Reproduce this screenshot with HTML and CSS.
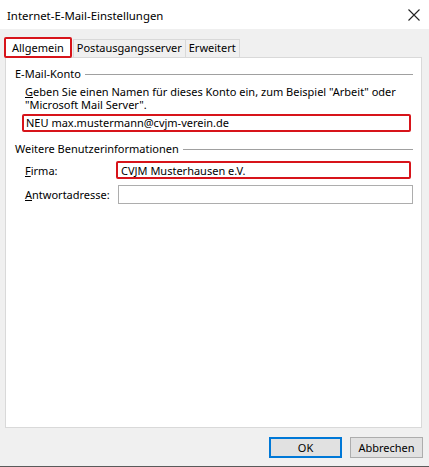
FILE: index.html
```html
<!DOCTYPE html>
<html>
<head>
<meta charset="utf-8">
<link rel="stylesheet" href="styles.css">
</head>
<body>
<div class="window">
  <div class="titlebar">
    <span class="title">Internet-E-Mail-Einstellungen</span>
    <svg class="close" width="12" height="12" viewBox="0 0 12 12"><path d="M0.5 0.5 L11.5 11.5 M11.5 0.5 L0.5 11.5" stroke="#222" stroke-width="1.1" fill="none"/></svg>
  </div>
  <div class="client">
    <div class="tabs">
      <div class="tab active">Allgemein</div>
      <div class="tab">Postausgangsserver</div>
      <div class="tab">Erweitert</div>
    </div>
    <div class="panel">
      <div class="group-head"><span>E-Mail-Konto</span><span class="rule"></span></div>
      <p class="desc">Geben Sie einen Namen für dieses Konto ein, zum Beispiel "Arbeit" oder "Microsoft Mail Server".</p>
      <div class="input red wide">NEU max.mustermann@cvjm-verein.de</div>
      <div class="group-head second"><span>Weitere Benutzerinformationen</span><span class="rule"></span></div>
      <div class="row">
        <label class="lbl">Firma:</label>
        <div class="input red">CVJM Musterhausen e.V.</div>
      </div>
      <div class="row">
        <label class="lbl">Antwortadresse:</label>
        <div class="input plain"></div>
      </div>
    </div>
    <div class="buttons">
      <button class="btn default">OK</button>
      <button class="btn">Abbrechen</button>
    </div>
  </div>
</div>
</body>
</html>
```
FILE: styles.css
```css
* { box-sizing: border-box; }
html, body { margin: 0; padding: 0; }
body {
  width: 429px;
  height: 467px;
  background: #f0f0f0;
  font-family: "Noto Sans", "Open Sans", sans-serif;
  font-size: 11px;
  color: #000;
  overflow: hidden;
}
.window {
  width: 429px;
  height: 467px;
  display: flex;
  flex-direction: column;
  border-bottom: 1px solid #5a5a5a;
}
.titlebar {
  height: 29px;
  background: #fff;
  display: flex;
  align-items: center;
  justify-content: space-between;
  padding: 0 9px 0 7px;
}
.title { font-size: 11.4px; padding-top: 1px; }
.close { margin-top: 1px; }
.client {
  flex: 1;
  display: flex;
  flex-direction: column;
  padding: 8px 7px 0 5px;
}
.tabs {
  display: flex;
  align-items: flex-end;
  height: 20px;
  position: relative;
  z-index: 1;
}
.tab {
  height: 18px;
  line-height: 16px;
  padding: 0 3px;
  border: 1px solid #d9d9d9;
  border-bottom: none;
  background: #f0f0f0;
  margin-left: -1px;
}
.tab.active {
  height: 21px;
  margin-left: -1px;
  margin-bottom: -1px;
  padding: 0 6px;
  background: #fff;
  border: 2px solid #d7141a;
  border-radius: 2px;
  line-height: 17px;
  margin-right: 2px;
}
.panel {
  height: 371px;
  background: #fff;
  border: 1px solid #d9d9d9;
  padding: 8px 8px 0 9px;
}
.group-head {
  display: flex;
  align-items: center;
  gap: 4px;
  height: 15px;
}
.group-head.second { margin-top: 9px; }
.rule { flex: 1; border-top: 1px solid #a0a0a0; margin-top: 1px; }
.desc {
  margin: 4px 0 0 10px;
  line-height: 13px;
  width: 385px;
}
.desc::first-letter, .lbl::first-letter { text-decoration: underline; }
.input {
  height: 18px;
  line-height: 14px;
  padding: 1px 3px;
  border: 1px solid #adadad;
  background: #fff;
  white-space: nowrap;
}
.input.red {
  border: 2px solid #d7141a;
  border-radius: 2px;
}
.input.wide {
  margin: 3px 2px 0 7px;
  padding: 0 2px;
}
.row {
  display: flex;
  align-items: center;
  margin-left: 10px;
  margin-top: 5px;
}
.row + .row { margin-top: 6px; }
.lbl { display: block; width: 91px; }
.row .input { flex: 1; margin-right: 2px; }
.row .input.plain { height: 19px; margin-left: 2px; margin-right: 0; }
.buttons {
  display: flex;
  justify-content: flex-end;
  gap: 8px;
  margin-top: 9px;
  margin-right: -1px;
}
.btn {
  font-family: inherit;
  font-size: 11px;
  width: 73px;
  height: 21px;
  padding: 0;
  background: #e1e1e1;
  border: 1px solid #adadad;
  color: #000;
}
.btn.default { border: 2px solid #0078d7; }
```
